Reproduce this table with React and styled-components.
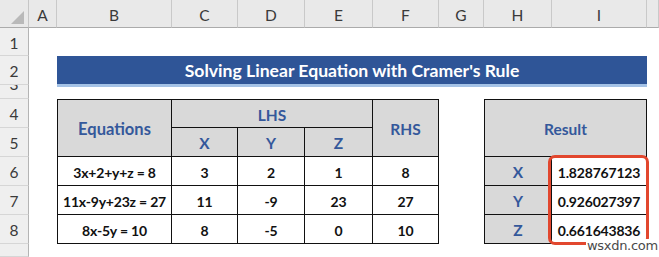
import React from "react";
import styled, { createGlobalStyle } from "styled-components";

const Global = createGlobalStyle`
  html, body { margin: 0; padding: 0; background: #ffffff; }
  body { font-family: Lato, "Noto Sans", sans-serif; overflow: hidden; }
`;

const Sheet = styled.div`
  position: relative;
  width: 659px;
  height: 257px;
  overflow: hidden;
  display: grid;
  grid-template-columns: 29px 28px 115px 66px 67px 68px 66px 45px 68px 95px 1fr;
  grid-template-rows: 28px 28px 29px 14px 29px 29px 29px 29px 29px 1fr;
  background: #ffffff;
`;

const Corner = styled.div`
  grid-column: 1;
  grid-row: 1;
  box-sizing: border-box;
  background: #e9e9e9;
  border-right: 1px solid #c6c6c6;
  border-bottom: 1px solid #ababab;
  display: flex;
  align-items: flex-end;
  justify-content: flex-end;
  padding: 0 4px 3px 0;
`;

const ColHead = styled.div`
  grid-row: 1;
  grid-column: ${(p) => p.$col};
  box-sizing: border-box;
  background: #e9e9e9;
  border-right: 1px solid #c9c9c9;
  border-bottom: 1px solid #ababab;
  display: flex;
  align-items: center;
  justify-content: center;
  font-family: Lato, "Noto Sans", sans-serif;
  font-size: 15.5px;
  color: #3a3a3a;
  padding-top: 2px;
`;

const RowHead = styled.div`
  grid-column: 1;
  grid-row: ${(p) => p.$row};
  box-sizing: border-box;
  background: #efefef;
  border-right: 1px solid #b4b4b4;
  border-bottom: 1px solid #d6d6d6;
  display: flex;
  align-items: ${(p) => (p.$clip ? "flex-start" : "center")};
  justify-content: center;
  overflow: hidden;
  font-family: Lato, "Noto Sans", sans-serif;
  font-size: 15.5px;
  color: #3a3a3a;
  padding-top: ${(p) => (p.$clip ? "0" : "3px")};
`;

const RowLabel = styled.span`
  display: block;
  line-height: 15px;
  margin-top: ${(p) => (p.$clip ? "-8px" : "0")};
`;

const TitleBar = styled.div`
  grid-column: 3 / 11;
  grid-row: 3;
  align-self: start;
  height: 27px;
  background: #2f5597;
  border-bottom: 3px solid #a4c2e6;
  display: flex;
  align-items: center;
  justify-content: center;
  color: #ffffff;
  font-family: Lato, "Noto Sans", sans-serif;
  font-weight: 700;
  font-size: 17.6px;
  padding-top: 1px;
  z-index: 1;
`;

const Cell = styled.div`
  grid-column: ${(p) => p.$col};
  grid-row: ${(p) => p.$row};
  box-sizing: border-box;
  border-right: 1px solid #111;
  border-bottom: 1px solid #111;
  border-top: ${(p) => (p.$top ? "1px solid #111" : "none")};
  border-left: ${(p) => (p.$left ? "1px solid #111" : "none")};
  background: ${(p) => (p.$head ? "#d9d9d9" : "#ffffff")};
  color: ${(p) => (p.$head ? "#34589b" : "#111111")};
  display: flex;
  align-items: center;
  justify-content: center;
  font-family: Lato, "Noto Sans", sans-serif;
  font-weight: 700;
  font-size: ${(p) => (p.$big ? "16.5px" : p.$head ? "15.5px" : "14px")};
  letter-spacing: ${(p) => (p.$head ? "0" : "-0.2px")};
  white-space: nowrap;
  padding-top: 2px;
`;

const Highlight = styled.div`
  grid-column: 10;
  grid-row: 7 / 10;
  margin: -2px -2px -1px -4px;
  border: 3px solid #e2472e;
  border-radius: 7px;
  z-index: 2;
  pointer-events: none;
`;

const Watermark = styled.div`
  position: absolute;
  left: 586px;
  top: 239px;
  padding: 0 1px;
  background: #ffffff;
  font-family: "DejaVu Sans", sans-serif;
  font-size: 13px;
  line-height: 14px;
  color: #4a4a4a;
  letter-spacing: -0.3px;
  z-index: 3;
`;

const cols = ["A", "B", "C", "D", "E", "F", "G", "H", "I", ""];

const eqs = [
  ["3x+2+y+z = 8", "3", "2", "1", "8"],
  ["11x-9y+23z = 27", "11", "-9", "23", "27"],
  ["8x-5y = 10", "8", "-5", "0", "10"],
];

const results = [
  ["X", "1.828767123"],
  ["Y", "0.926027397"],
  ["Z", "0.661643836"],
];

export default function App() {
  return (
    <>
      <Global />
      <Sheet>
        <Corner>
          <svg width="13" height="13" viewBox="0 0 13 13">
            <polygon points="13,0 13,13 0,13" fill="#b9b9b9" />
          </svg>
        </Corner>
        {cols.map((c, i) => (
          <ColHead key={i} $col={i + 2}>
            {c}
          </ColHead>
        ))}
        {["1", "2", "3", "4", "5", "6", "7", "8", ""].map((r, i) => (
          <RowHead key={i} $row={i + 2} $clip={r === "3"}>
            <RowLabel $clip={r === "3"}>{r}</RowLabel>
          </RowHead>
        ))}

        <TitleBar>Solving Linear Equation with Cramer's Rule</TitleBar>

        <Cell $col={3} $row="5 / 7" $top $left $head $big>
          Equations
        </Cell>
        <Cell $col="4 / 7" $row={5} $top $head>
          LHS
        </Cell>
        <Cell $col={7} $row="5 / 7" $top $head>
          RHS
        </Cell>
        {["X", "Y", "Z"].map((v, i) => (
          <Cell key={v} $col={4 + i} $row={6} $head>
            {v}
          </Cell>
        ))}
        {eqs.map((row, r) =>
          row.map((v, c) => (
            <Cell key={`${r}-${c}`} $col={3 + c} $row={7 + r} $left={c === 0}>
              {v}
            </Cell>
          ))
        )}

        <Cell $col="9 / 11" $row="5 / 7" $top $left $head>
          Result
        </Cell>
        {results.map(([k, v], r) => (
          <React.Fragment key={k}>
            <Cell $col={9} $row={7 + r} $left $head>
              {k}
            </Cell>
            <Cell $col={10} $row={7 + r}>
              {v}
            </Cell>
          </React.Fragment>
        ))}
        <Highlight />
        <Watermark>wsxdn.com</Watermark>
      </Sheet>
    </>
  );
}
